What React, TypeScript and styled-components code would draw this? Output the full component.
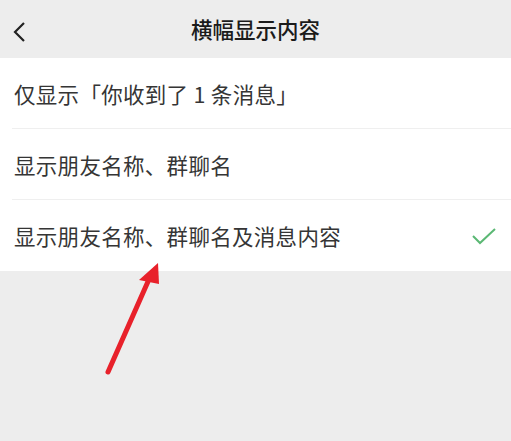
import React from "react";
import styled, { createGlobalStyle } from "styled-components";

const GlobalStyle = createGlobalStyle`
  html, body {
    margin: 0;
    padding: 0;
    background: #ededed;
  }
  body {
    font-family: "Noto Sans CJK SC", "Noto Sans", sans-serif;
  }
`;

const Page = styled.div`
  position: relative;
  width: 511px;
  height: 441px;
  background: #ededed;
  overflow: hidden;
`;

const Header = styled.div`
  height: 58px;
  display: flex;
  align-items: center;
  justify-content: center;
  position: relative;
`;

const BackButton = styled.div`
  position: absolute;
  left: 10px;
  top: 18px;
  width: 22px;
  height: 26px;
  display: flex;
  align-items: center;
`;

const Title = styled.div`
  font-size: 21.5px;
  font-weight: 500;
  color: #1b1b1b;
  margin-top: -1px;
`;

const List = styled.div`
  background: #fff;
`;

const Row = styled.div<{ $last?: boolean }>`
  height: 71px;
  margin-left: 12px;
  padding: 0 14px 0 2px;
  display: flex;
  align-items: center;
  justify-content: space-between;
  box-sizing: border-box;
  border-bottom: ${(p) => (p.$last ? "none" : "1px solid #efefef")};
`;

const Label = styled.span`
  font-size: 21.5px;
  color: #353535;
  letter-spacing: 0.3px;
`;

const Arrow = styled.svg`
  position: absolute;
  left: 0;
  top: 0;
  pointer-events: none;
`;

const options = [
  "仅显示「你收到了 1 条消息」",
  "显示朋友名称、群聊名",
  "显示朋友名称、群聊名及消息内容",
];

export default function App() {
  const selected = 2;
  return (
    <Page>
      <GlobalStyle />
      <Header>
        <BackButton>
          <svg width="22" height="26" viewBox="0 0 22 26">
            <path d="M14 5 L5 14 L14 23" fill="none" stroke="#222" strokeWidth="2.2" />
          </svg>
        </BackButton>
        <Title>横幅显示内容</Title>
      </Header>
      <List>
        {options.map((text, i) => (
          <Row key={text} $last={i === options.length - 1}>
            <Label>{text}</Label>
            {i === selected && (
              <svg width="26" height="20" viewBox="0 0 26 20">
                <path d="M2 10 L9 17 L24 3" fill="none" stroke="#5bb874" strokeWidth="2" />
              </svg>
            )}
          </Row>
        ))}
      </List>
      <Arrow width="511" height="441" viewBox="0 0 511 441">
        <line x1="108" y1="372" x2="150" y2="277" stroke="#e8212b" strokeWidth="5" strokeLinecap="round" />
        <polygon points="158,263 139,280 159,284" fill="#e8212b" />
      </Arrow>
    </Page>
  );
}
